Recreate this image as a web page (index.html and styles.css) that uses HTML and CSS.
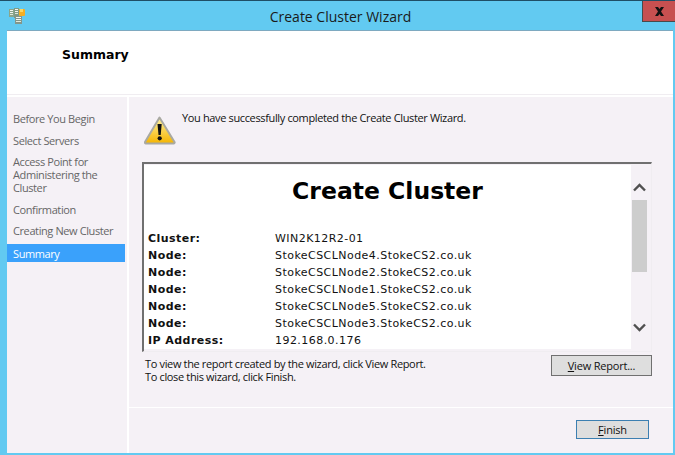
FILE: index.html
```html
<!DOCTYPE html>
<html lang="en">
<head>
<meta charset="utf-8">
<title>Create Cluster Wizard</title>
<link rel="stylesheet" href="styles.css">
</head>
<body>
<div class="window">
  <div class="titlebar">
    <svg class="appicon" width="16" height="17" viewBox="0 0 16 17">
      <rect x="0" y="2" width="5" height="8" fill="#8aa58a"/><rect x="1" y="3" width="3" height="1" fill="#f2f5f0"/><rect x="1" y="5" width="3" height="1" fill="#f2f5f0"/><rect x="1" y="7" width="3" height="1" fill="#dfe8dc"/>
      <rect x="5" y="1" width="5" height="10" fill="#7f9a85"/><rect x="6" y="2" width="3" height="1" fill="#f2f5f0"/><rect x="6" y="4" width="3" height="1" fill="#f2f5f0"/><rect x="6" y="6" width="3" height="1" fill="#dfe8dc"/>
      <rect x="6" y="9" width="7" height="8" fill="#84968a"/><rect x="7" y="10" width="5" height="1" fill="#f2f5f0"/><rect x="7" y="12" width="5" height="1" fill="#f2f5f0"/><rect x="7" y="14" width="5" height="1" fill="#dfe8dc"/>
      <rect x="10" y="2" width="6" height="7" rx="1" fill="#f5ae22"/><rect x="11" y="2" width="3" height="3" fill="#fbd760"/>
    </svg>
    <div class="title">Create Cluster Wizard</div>
    <div class="close"><svg width="11" height="9" viewBox="0 0 11 9"><path d="M1 0h3l1.500 2L7 0h3L7 4.500 10 9H7L5.500 7 4 9H1l3-4.500z" fill="#111"/></svg></div>
  </div>
  <div class="client">
    <header class="header"><h1 class="heading">Summary</h1></header>
    <div class="main">
      <nav class="steps">
        <div class="step">Before You Begin</div>
        <div class="step">Select Servers</div>
        <div class="step">Access Point for Administering the Cluster</div>
        <div class="step">Confirmation</div>
        <div class="step">Creating New Cluster</div>
        <div class="step current">Summary</div>
      </nav>
      <section class="content">
        <div class="upper">
          <div class="notice">
            <svg class="warn" width="32" height="29" viewBox="0 0 32 29">
              <defs><linearGradient id="w" x1="0" y1="0" x2="0" y2="1"><stop offset="0" stop-color="#fff2a0"/><stop offset="1" stop-color="#f5b400"/></linearGradient></defs>
              <path d="M15.500 1.500 30.500 26a1 1 0 0 1-1 1.500H2A1 1 0 0 1 1 26z" fill="url(#w)" stroke="#a9a9a2" stroke-width="2" stroke-linejoin="round"/>
              <path d="M13.500 8h4.200l-1 11h-2.200z" fill="#111"/><circle cx="15.700" cy="22.300" r="2.100" fill="#111"/>
            </svg>
            <p class="notice-text">You have successfully completed the Create Cluster Wizard.</p>
          </div>
          <div class="report">
            <div class="report-body">
              <h2 class="report-title">Create Cluster</h2>
              <div class="facts">
                <b>Cluster:</b><span>WIN2K12R2-01</span>
                <b>Node:</b><span>StokeCSCLNode4.StokeCS2.co.uk</span>
                <b>Node:</b><span>StokeCSCLNode2.StokeCS2.co.uk</span>
                <b>Node:</b><span>StokeCSCLNode1.StokeCS2.co.uk</span>
                <b>Node:</b><span>StokeCSCLNode5.StokeCS2.co.uk</span>
                <b>Node:</b><span>StokeCSCLNode3.StokeCS2.co.uk</span>
                <b>IP Address:</b><span>192.168.0.176</span>
              </div>
            </div>
            <div class="scrollbar">
              <svg class="arrow" width="13" height="9" viewBox="0 0 13 9"><path d="M1 7.500 6.500 2 12 7.500" fill="none" stroke="#505050" stroke-width="2.400"/></svg>
              <div class="track"><div class="thumb"></div></div>
              <svg class="arrow" width="13" height="9" viewBox="0 0 13 9"><path d="M1 1.500 6.500 7 12 1.500" fill="none" stroke="#505050" stroke-width="2.400"/></svg>
            </div>
          </div>
          <div class="after">
            <p class="hint">To view the report created by the wizard, click View Report.<br>To close this wizard, click Finish.</p>
            <button class="btn view"><u>V</u>iew Report...</button>
          </div>
        </div>
        <footer class="footer"><button class="btn finish"><u>F</u>inish</button></footer>
      </section>
    </div>
  </div>
</div>
</body>
</html>
```
FILE: styles.css
```css
* { box-sizing: border-box; }
html, body { margin: 0; padding: 0; }
body { width: 675px; height: 455px; overflow: hidden; font-family: "Open Sans", "Liberation Sans", sans-serif; font-size: 11px; color: #111; }
.window { width: 675px; height: 455px; display: flex; flex-direction: column; background: #62caf1; border-top: 1px solid #1f4e66; }
.titlebar { height: 29px; flex: none; position: relative; display: flex; align-items: center; justify-content: center; }
.appicon { position: absolute; left: 9px; top: 6px; }
.title { font-size: 14px; color: #1a1a1a; margin-left: 6px; margin-top: 1px; }
.close { position: absolute; right: 0; top: 0; width: 33px; height: 21px; background: #c75050; border: 1px solid #4a4a4a; border-top: 0; border-right: 0; display: flex; align-items: center; justify-content: center; }
.client { flex: 1; margin: 0 2px 2px 7px; display: flex; flex-direction: column; min-height: 0; background: #f5f1f6; border-top: 1px solid #7ea9c0; }
.header { height: 64px; flex: none; background: #fff; border-bottom: 1px solid #f0edf1; display: flex; align-items: center; padding: 0 0 14px 55px; }
.heading { margin: 0; font-family: "DejaVu Sans", sans-serif; font-size: 12.5px; font-weight: 700; color: #000; line-height: 1; }
.main { flex: 1; display: flex; min-height: 0; padding-top: 2px; background: #fff; }
.steps { width: 120px; flex: none; background: #f5f1f6; padding-top: 13px; margin-right: 2px; }
.step { padding: 2px 6px 3px; margin-bottom: 3.6px; width: 118px; line-height: 13px; color: #666; letter-spacing: -.4px; }
.current { background: #3aa1fb; color: #fff; height: 18px; padding-top: 3px; }
.content { flex: 1; display: flex; flex-direction: column; background: #f5f1f6; min-width: 0; }
.upper { flex: 1; padding: 0 21px 0 13px; border-bottom: 1px solid #fff; }
.notice { height: 65px; position: relative; padding: 13px 0 0 40px; }
.warn { position: absolute; left: 2px; top: 19px; }
.notice-text { margin: 0; line-height: 15px; letter-spacing: -.36px; color: #111; }
.report { height: 190px; display: flex; border: 1px solid #f0edf1; border-top: 2px solid #707070; border-left: 2px solid #707070; }
.report-body { flex: 1; background: #fff; margin-top: 1px; margin-bottom: 2px; font-family: "DejaVu Sans", sans-serif; font-size: 11px; letter-spacing: .45px; color: #111; overflow: hidden; }
.report-title { margin: 11px 0 24px; text-align: center; font-size: 23.5px; font-weight: 700; line-height: 30px; letter-spacing: 0; color: #000; }
.facts { display: grid; grid-template-columns: 127px 1fr; grid-auto-rows: 17px; line-height: 17px; padding-left: 4px; }
.scrollbar { width: 20px; flex: none; display: flex; flex-direction: column; align-items: center; padding: 19px 3px 0 0; }
.arrow { flex: none; }
.track { flex: none; height: 131px; width: 15px; padding-top: 8px; }
.thumb { width: 15px; height: 72px; background: #cdcdcd; }
.after { display: flex; justify-content: space-between; padding: 3px 0 0 3px; }
.hint { margin: 0; line-height: 13px; letter-spacing: -.35px; padding-top: 2px; }
.btn { font-family: "Open Sans", "Liberation Sans", sans-serif; font-size: 11px; color: #111; background: #dedede; border: 1px solid #707070; padding: 0; line-height: 1; letter-spacing: -.2px; }
.view { width: 101px; height: 21px; }
.footer { height: 45px; flex: none; display: flex; justify-content: flex-end; padding: 12px 24px 0 0; }
.finish { width: 73px; height: 19px; border-color: #3c7fb1; }
```
